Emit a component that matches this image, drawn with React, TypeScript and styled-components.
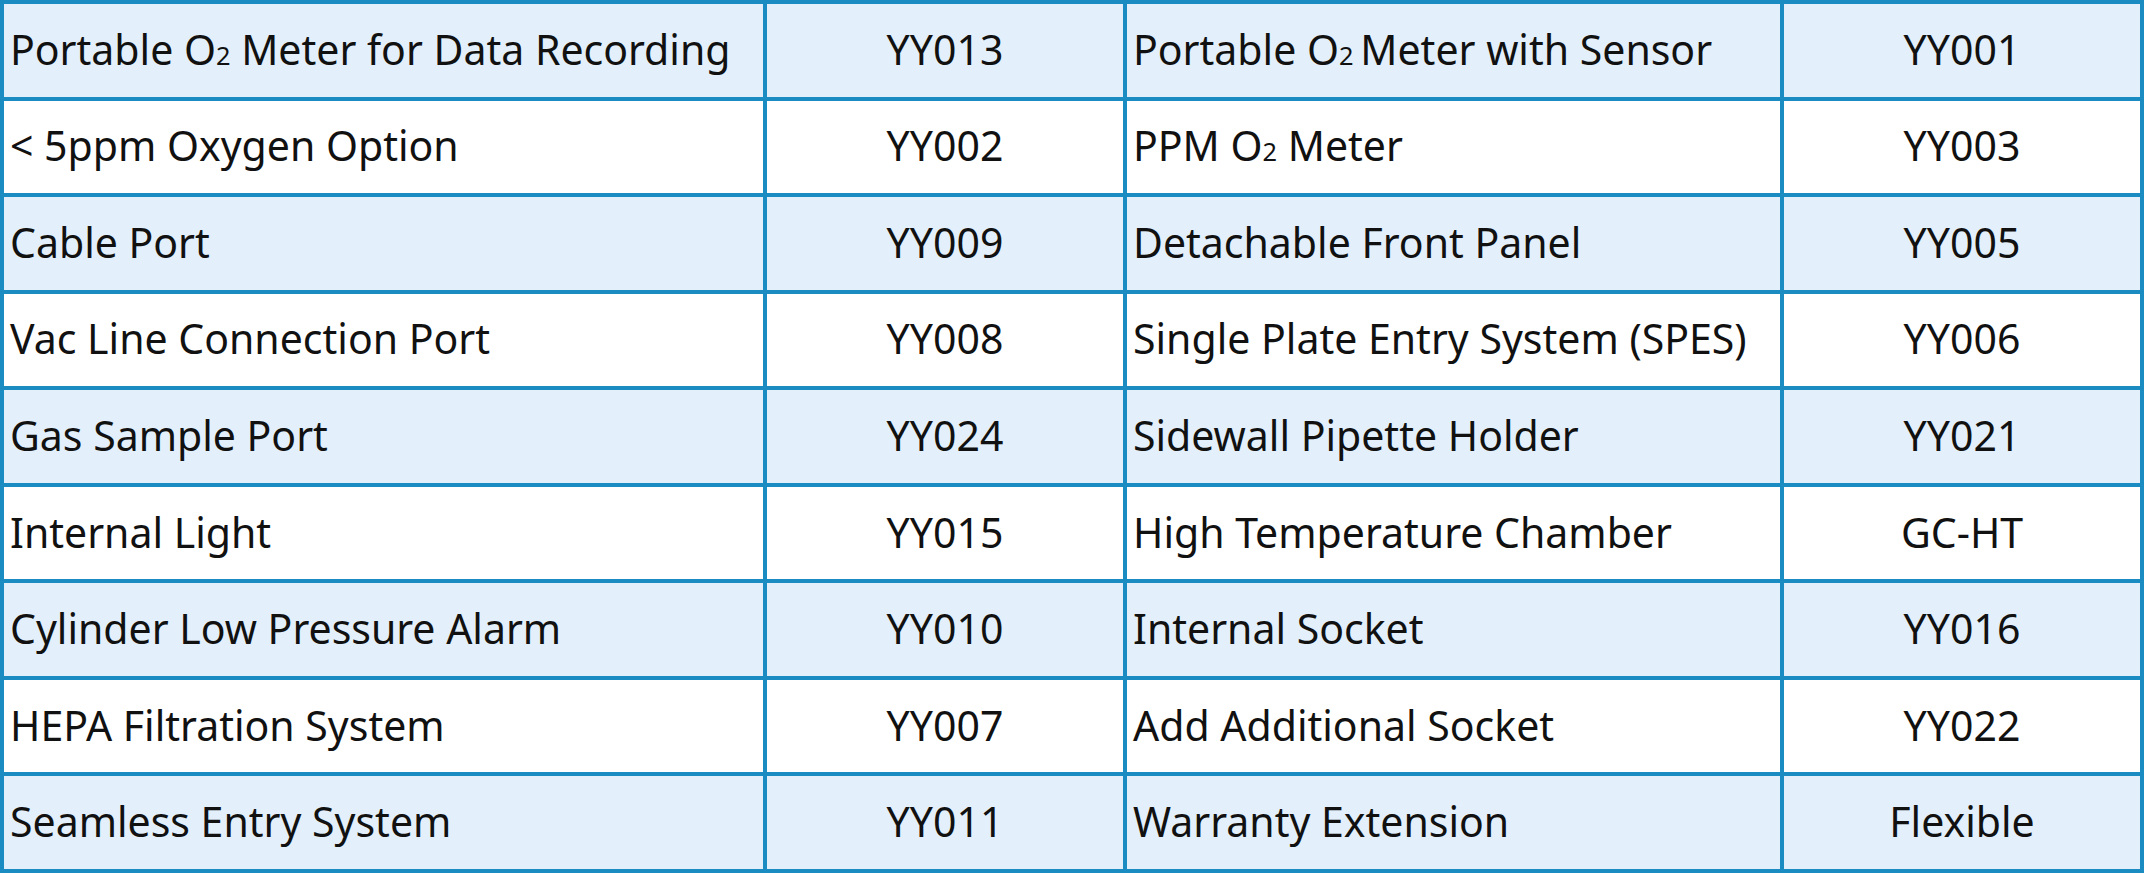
import React from "react";
import styled, { createGlobalStyle } from "styled-components";

const GlobalStyle = createGlobalStyle`
  html, body {
    margin: 0;
    padding: 0;
    background: white;
  }
`;

const Table = styled.div`
  width: 2144px;
  height: 873px;
  box-sizing: border-box;
  display: grid;
  grid-template-columns: 759px 356px 653px 1fr;
  grid-template-rows: repeat(9, 1fr);
  gap: 4px;
  padding: 4px;
  background: #1a8cc2;
  font-family: "Noto Sans", "Open Sans", sans-serif;
  font-size: 41px;
  color: #111;
`;

const Cell = styled.div<{ shaded: boolean; center?: boolean }>`
  background: ${(props) => (props.shaded ? "#e3f0fb" : "#ffffff")};
  display: flex;
  align-items: center;
  justify-content: ${(props) => (props.center ? "center" : "flex-start")};
  padding: 0px 6px 3px;
  white-space: nowrap;
  overflow: hidden;
`;

const Sub = styled.span`
  font-size: 0.62em;
`;

type Row = {
  left: React.ReactNode;
  leftCode: string;
  right: React.ReactNode;
  rightCode: string;
};

const rows: Row[] = [
  {
    left: (
      <span>
        Portable O<Sub>2</Sub> Meter for Data Recording
      </span>
    ),
    leftCode: "YY013",
    right: (
      <span>
        Portable O<Sub>2</Sub>{"\u2009"}Meter with Sensor
      </span>
    ),
    rightCode: "YY001",
  },
  {
    left: "< 5ppm Oxygen Option",
    leftCode: "YY002",
    right: (
      <span>
        PPM O<Sub>2</Sub> Meter
      </span>
    ),
    rightCode: "YY003",
  },
  { left: "Cable Port", leftCode: "YY009", right: "Detachable Front Panel", rightCode: "YY005" },
  {
    left: "Vac Line Connection Port",
    leftCode: "YY008",
    right: "Single Plate Entry System (SPES)",
    rightCode: "YY006",
  },
  { left: "Gas Sample Port", leftCode: "YY024", right: "Sidewall Pipette Holder", rightCode: "YY021" },
  { left: "Internal Light", leftCode: "YY015", right: "High Temperature Chamber", rightCode: "GC-HT" },
  { left: "Cylinder Low Pressure Alarm", leftCode: "YY010", right: "Internal Socket", rightCode: "YY016" },
  { left: "HEPA Filtration System", leftCode: "YY007", right: "Add Additional Socket", rightCode: "YY022" },
  { left: "Seamless Entry System", leftCode: "YY011", right: "Warranty Extension", rightCode: "Flexible" },
];

export default function App() {
  return (
    <>
      <GlobalStyle />
      <Table>
        {rows.map((row, i) => {
          const shaded = i % 2 === 0;
          return (
            <React.Fragment key={i}>
              <Cell shaded={shaded}>{row.left}</Cell>
              <Cell shaded={shaded} center>
                {row.leftCode}
              </Cell>
              <Cell shaded={shaded}>{row.right}</Cell>
              <Cell shaded={shaded} center>
                {row.rightCode}
              </Cell>
            </React.Fragment>
          );
        })}
      </Table>
    </>
  );
}
